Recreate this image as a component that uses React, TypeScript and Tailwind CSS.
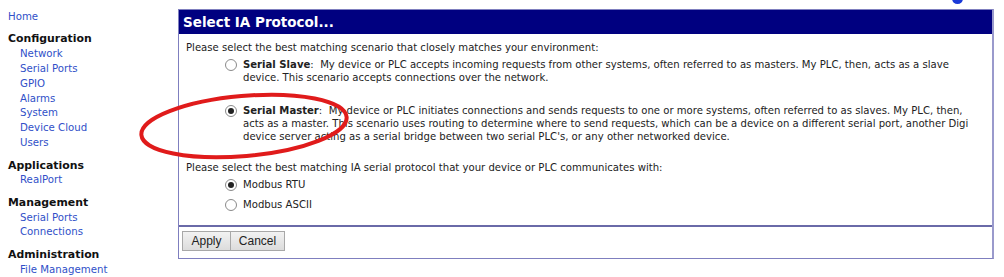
import React from "react";

const font = { fontFamily: '"DejaVu Sans", Verdana, sans-serif' };

const nav: { head?: string; links: string[]; top?: boolean }[] = [
  { links: ["Home"], top: true },
  {
    head: "Configuration",
    links: ["Network", "Serial Ports", "GPIO", "Alarms", "System", "Device Cloud", "Users"],
  },
  { head: "Applications", links: ["RealPort"] },
  { head: "Management", links: ["Serial Ports", "Connections"] },
  { head: "Administration", links: ["File Management"] },
];

function Radio({ checked }: { checked?: boolean }) {
  return (
    <span className="mt-[1px] flex h-[12px] w-[12px] shrink-0 items-center justify-center rounded-full border border-[#8a8a8a] bg-white">
      {checked && <span className="h-[6px] w-[6px] rounded-full bg-[#222]" />}
    </span>
  );
}

export default function App() {
  return (
    <div
      className="relative h-[277px] w-[1004px] overflow-hidden bg-white text-[10.1px] text-[#222]"
      style={font}
    >
      <div className="flex items-start">
        {/* sidebar */}
        <div className="w-[178px] shrink-0 pl-[8px] pt-[10px]">
          {nav.map((g, i) => (
            <div key={i} className="mb-[7.7px] leading-[14.8px]">
              {g.head && <div className="text-[10.9px] font-bold text-[#111]">{g.head}</div>}
              {g.links.map((l) => (
                <div
                  key={l}
                  className={`text-[10.2px] text-[#3050c8] ${g.top ? "" : "pl-[12px]"}`}
                >
                  {l}
                </div>
              ))}
            </div>
          ))}
        </div>

        {/* main panel */}
        <div className="mt-[9px] w-[816px] shrink-0 border border-r-2 border-[#7f7fbf] border-r-[#9a9acc]">
          <div className="h-[24px] bg-[#000080] pl-[4px] text-[13.5px] font-bold leading-[24px] text-white">
            Select IA Protocol...
          </div>
          <div className="pl-[7px] pr-[22px] pt-[7px] leading-[13px]">
            <div>Please select the best matching scenario that closely matches your environment:</div>
            <div className="mt-[4px] flex gap-[6px] pl-[39px]">
              <Radio />
              <div>
                <b>Serial Slave</b>:&nbsp; My device or PLC accepts incoming requests from other systems, often
                referred to as masters. My PLC, then, acts as a slave device. This scenario accepts connections
                over the network.
              </div>
            </div>
            <div className="mt-[20px] flex gap-[6px] pl-[39px]">
              <Radio checked />
              <div>
                <b>Serial Master</b>:&nbsp; My device or PLC initiates connections and sends requests to one or
                more systems, often referred to as slaves. My PLC, then, acts as a master. This scenario uses
                routing to determine where to send requests, which can be a device on a different serial port,
                another Digi device server acting as a serial bridge between two serial PLC's, or any other
                networked device.
              </div>
            </div>
            <div className="mt-[18px]">
              Please select the best matching IA serial protocol that your device or PLC communicates with:
            </div>
            <div className="mt-[4px] flex gap-[6px] pl-[39px]">
              <Radio checked />
              <span>Modbus RTU</span>
            </div>
            <div className="mt-[7px] flex gap-[6px] pl-[39px]">
              <Radio />
              <span>Modbus ASCII</span>
            </div>
          </div>
          <div className="mt-[14px] border-t-2 border-[#6a6aa8] px-[3px] pb-[7px] pt-[4px]">
            <div className="flex" style={{ fontFamily: '"Liberation Sans", Arial, sans-serif' }}>
              <button className="h-[20px] w-[49px] border border-[#a8a8a8] bg-gradient-to-b from-[#f2f2f2] to-[#dcdcdc] text-[12px] text-[#222]">
                Apply
              </button>
              <button className="h-[20px] w-[54px] border border-l-0 border-[#a8a8a8] bg-gradient-to-b from-[#f2f2f2] to-[#dcdcdc] text-[12px] text-[#222]">
                Cancel
              </button>
            </div>
          </div>
        </div>
      </div>

      {/* blue dot cut off at top */}
      <div className="absolute left-[952px] top-[-7px] h-[11px] w-[11px] rounded-full bg-[#1a3ad8]" />

      {/* red hand-drawn annotation */}
      <svg className="pointer-events-none absolute left-0 top-0" width="1004" height="277">
        <ellipse
          cx="244"
          cy="126"
          rx="103"
          ry="30"
          fill="none"
          stroke="#e01b1b"
          strokeWidth="4"
          transform="rotate(-5 244 126)"
        />
      </svg>
    </div>
  );
}
